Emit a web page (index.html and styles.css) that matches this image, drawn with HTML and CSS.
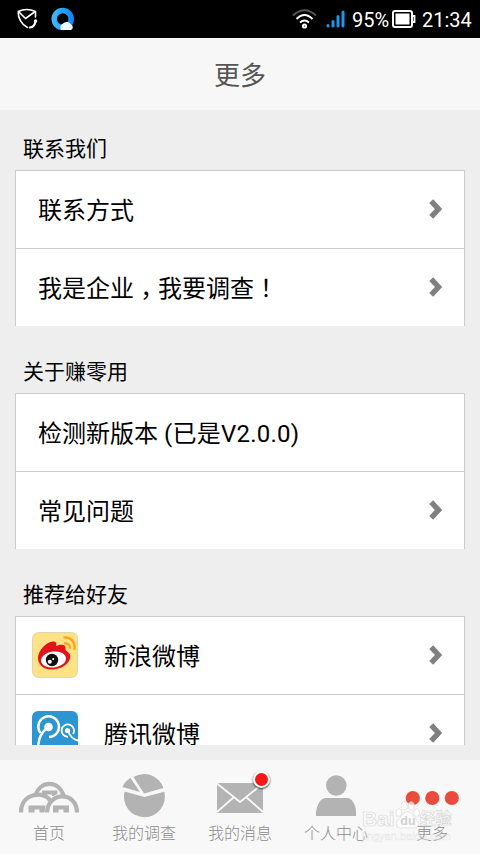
FILE: index.html
```html
<!DOCTYPE html>
<html lang="zh-CN">
<head>
<meta charset="utf-8">
<title>更多</title>
<link rel="stylesheet" href="styles.css">
</head>
<body>
<svg class="defs" aria-hidden="true">
  <symbol id="chevron" viewBox="0 0 14 20"><path d="M2.200 2.200 L9.500 10 L2.200 17.800" fill="none" stroke="#808080" stroke-width="5.400"/></symbol>
</svg>
<div class="status">
  <svg class="status-left" width="60" height="26" viewBox="0 0 60 26">
    <g fill="none" stroke="#fff" stroke-width="1.600" stroke-linecap="round" stroke-linejoin="round">
      <path d="M10.500 21.500C4.500 18.500 1 12 1.200 5.500Q9.500 1.500 18.500 5.500V11"/>
      <path d="M2 6L8.500 12.500 17.500 6"/>
      <path d="M18.500 15.500Q17.500 21 12.800 21.500" stroke-width="2"/>
    </g>
    <circle cx="18.600" cy="15" r="1.700" fill="#fff"/>
    <defs><linearGradient id="ring" x1="0" x2="1"><stop offset="0" stop-color="#3db4fb"/><stop offset="1" stop-color="#0d8cf8"/></linearGradient></defs>
    <circle cx="45.700" cy="13" r="8.500" fill="none" stroke="url(#ring)" stroke-width="5.500"/>
    <path d="M44 24A4.500 4.500 0 0 1 46 17.500A5 5 0 0 1 54 18.500A3 3 0 0 1 54 24Z" fill="#f2f8ff"/>
  </svg>
  <div class="status-right">
    <svg width="54" height="24" viewBox="0 0 54 24">
      <g fill="none" stroke="#fff" stroke-width="2">
        <path d="M1 8.500Q12.500-2 24 8.500" stroke="#555"/>
        <path d="M4.500 12Q12.500 4 20.500 12"/>
        <path d="M8 15.500Q12.500 11.500 17 15.500"/>
        <circle cx="12.500" cy="19" r="1.600"/>
      </g>
      <path d="M36 18.500V19M41 14.500V19M46 9.500V19M51 5V19" stroke="#2196e8" stroke-width="3" stroke-linecap="round"/>
    </svg>
    <span class="percent">95%</span>
    <svg class="battery" width="25" height="20" viewBox="0 0 25 20"><rect x="1" y="2" width="19" height="16" rx="2" fill="none" stroke="#fff" stroke-width="2"/><rect x="3.500" y="4.500" width="14" height="11" fill="#fff"/><path d="M20 7H22.500V13H20" fill="none" stroke="#fff" stroke-width="1.800"/></svg>
    <span class="time">21:34</span>
  </div>
</div>
<header class="title">更多</header>
<main class="content">
  <section class="group">
    <h2>联系我们</h2>
    <ul>
      <li><span>联系方式</span><svg class="chev"><use href="#chevron"/></svg></li>
      <li><span>我是企业<i class="punct comma" lang="zh-TW">，</i>我要调查<i class="punct" lang="zh-TW">！</i></span><svg class="chev"><use href="#chevron"/></svg></li>
    </ul>
  </section>
  <section class="group">
    <h2>关于赚零用</h2>
    <ul>
      <li><span>检测新版本 <span class="version">(已是V2.0.0)</span></span></li>
      <li><span>常见问题</span><svg class="chev"><use href="#chevron"/></svg></li>
    </ul>
  </section>
  <section class="group">
    <h2>推荐给好友</h2>
    <ul>
      <li class="share">
        <svg class="logo" viewBox="0 0 46 46">
          <rect x=".5" y=".5" width="45" height="45" rx="6" fill="#fee285" stroke="#d9d7ad"/>
          <path d="M6 26C6 19 14 10 21 9.500C24 9.500 25 11.500 24 14C29 12 34 12 33.500 17C33.300 19 36 19 38 22.500C40 28 33 37.500 19 37.500C11 37.500 6 32 6 26Z" fill="#e2141b"/>
          <ellipse cx="21.500" cy="27.500" rx="12.500" ry="8" fill="#fff" transform="rotate(-7 21.500 27.500)"/>
          <circle cx="20" cy="28" r="6.200" fill="#111"/>
          <circle cx="17.800" cy="29.800" r="2" fill="#fff"/><circle cx="21.200" cy="27" r="1" fill="#fff"/>
          <path d="M31.500 5.500C39 4.500 43.500 10 42.500 18M32 11.500C36 11 38.500 13 37.500 17" fill="none" stroke="#ffa21c" stroke-width="2.300"/>
        </svg>
        <span>新浪微博</span><svg class="chev"><use href="#chevron"/></svg>
      </li>
      <li class="share">
        <svg class="logo lower" viewBox="0 0 46 46">
          <rect width="46" height="46" rx="6" fill="#2d96d2"/>
          <circle cx="16.500" cy="16" r="4.300" fill="#fff"/>
          <path d="M8.500 22A10.300 10.300 0 1 1 17 26M15 17Q6 24 6 38" fill="none" stroke="#fff" stroke-width="2.500"/>
          <circle cx="35.500" cy="19.500" r="2.600" fill="#fff"/>
          <path d="M36 25.800A6.200 6.200 0 1 1 41 23M36 20Q39 28 46 29.500" fill="none" stroke="#fff" stroke-width="1.800"/>
        </svg>
        <span>腾讯微博</span><svg class="chev"><use href="#chevron"/></svg>
      </li>
    </ul>
  </section>
</main>
<nav class="tabs">
  <a class="home">
    <svg viewBox="0 0 64 46"><g fill="none" stroke="#b3b3b3" stroke-width="4.200"><path d="M4 39.500C4 19 28 18 33 27.500"/><path d="M30 39.500C31 18 60 18 60 39.500"/><path d="M18.500 22.500C23 7 42 7 46.500 22.500"/></g><path d="M11.500 32.500H28.500L27.500 39.500H22.500V36.500H17.500V39.500H11.500ZM36 32.500H52V39.500H46.500V36.500H41.500V39.500H36ZM25 17.500H40.500V21L36.500 23H35V21.500H30V23H28.500L25 21Z" fill="#b3b3b3"/></svg>
    <span>首页</span>
  </a>
  <a>
    <svg viewBox="0 0 64 46"><g fill="#b3b3b3" transform="translate(0 1)"><path d="M32.500 23L52.300 17.700A20.500 20.500 0 1 1 12.600 17.500Z"/><path d="M32 19.500L21.500 3A20.500 20.500 0 0 1 51.500 14Z"/><path d="M28 18L10.500 13Q13 7 18.500 4Z"/></g></svg>
    <span>我的调查</span>
  </a>
  <a>
    <svg viewBox="0 0 64 46"><rect x="9" y="10" width="46" height="30" fill="#b3b3b3"/><path d="M9 10.500L32 29 55 10.500M9 39L26 24M55 39L38 24" fill="none" stroke="#f8f8f8" stroke-width="1.800"/></svg>
    <i class="badge"></i>
    <span>我的消息</span>
  </a>
  <a>
    <svg viewBox="0 0 64 46"><g fill="#b3b3b3"><circle cx="32.300" cy="12.500" r="10.300"/><path d="M12 43V39C13 31 17 25 22 25H43C48 25 52 32 52 39V43Z"/></g></svg>
    <span>个人中心</span>
  </a>
  <a>
    <svg viewBox="0 0 64 46"><g fill="#e94b3c"><circle cx="12.800" cy="25" r="7.100"/><circle cx="32.300" cy="25" r="7.100"/><circle cx="51.800" cy="25" r="7.100"/></g></svg>
    <span>更多</span>
  </a>
  <div class="watermark">
    <div class="mark"><b>Bai</b><svg width="25" height="29" viewBox="0 0 26 30"><ellipse cx="4" cy="12" rx="3" ry="4"/><ellipse cx="9.500" cy="5" rx="3" ry="4.300"/><ellipse cx="17" cy="5" rx="3" ry="4.300"/><ellipse cx="22.500" cy="12" rx="3" ry="4"/><path d="M13 11C17 11 19 16 23 20C27 25 22 29 18 28H8C3 29-1 25 3 20C7 16 9 11 13 11Z"/><text x="5.500" y="25">du</text></svg><b class="cn">经验</b></div>
    <div class="url">jingyan.baidu.com</div>
  </div>
</nav>
</body>
</html>
```
FILE: styles.css
```css
* { box-sizing: border-box; }
body {
  margin: 0;
  width: 480px;
  height: 854px;
  overflow: hidden;
  display: flex;
  flex-direction: column;
  background: #eee;
  color: #000;
  font-family: Roboto, "Noto Sans CJK SC", sans-serif;
}
.defs { position: absolute; width: 0; height: 0; }
.status {
  height: 38px;
  flex: none;
  display: flex;
  justify-content: space-between;
  align-items: center;
  padding: 0 9px 0 17px;
  background: #000;
  color: #fff;
  font-size: 20px;
}
.status-right { display: flex; align-items: center; white-space: nowrap; }
.percent { margin-left: 6px; width: 37px; padding-top: 2px; }
.battery { margin-left: 3px; }
.time { margin-left: 5px; width: 49px; padding-top: 2px; }
.title {
  height: 72px;
  flex: none;
  background: #f7f7f7;
  color: #555;
  padding-top: 2px;
  font-size: 26px;
  line-height: 72px;
  text-align: center;
}
.content { height: 635px; flex: none; overflow: hidden; padding: 0 15px; }
.group { margin-top: 23px; }
.group:first-child { padding-top: 16px; margin-top: 0; }
.group h2 {
  margin: 0;
  height: 44px;
  padding: 1px 0 0 8px;
  font-size: 21px;
  font-weight: 400;
  line-height: 44px;
}
.group ul {
  margin: 0;
  padding: 0;
  list-style: none;
  background: #fff;
  border: 1px solid #ccc;
  border-width: 0 1px;
}
.group li {
  height: 78px;
  display: flex;
  align-items: center;
  border-top: 1px solid #ccc;
  padding: 0 21px 2px 22px;
  font-size: 24px;
}
.group li.share { padding-left: 16px; }
.logo { width: 46px; height: 46px; margin-right: 26px; }
.logo.lower { margin-top: 2px; }
.punct { font-style: normal; font-family: "Noto Sans CJK TC", sans-serif; line-height: 0; }
.comma { vertical-align: -7px; }
.version { letter-spacing: .25px; }
.chev { width: 14px; height: 20px; margin-left: auto; }
.tabs {
  position: relative;
  height: 94px;
  margin-top: 15px;
  flex: none;
  display: flex;
  background: #f8f8f8;
}
.tabs a {
  position: relative;
  width: 96px;
  padding-top: 13px;
  display: flex;
  flex-direction: column;
  align-items: center;
  color: #8c8c8c;
  font-size: 16px;
  font-weight: 300;
  line-height: 24px;
}
.tabs a.home { padding-left: 2px; }
.tabs a svg { width: 64px; height: 46px; flex: none; }
.tabs a span { margin-top: 3px; }
.badge {
  position: absolute;
  left: 61px;
  top: 11px;
  width: 17px;
  height: 17px;
  border: 2px solid #fff;
  border-radius: 50%;
  background: #f91616;
  box-shadow: 0 1px 2px #333;
}
.watermark {
  position: absolute;
  left: 362px;
  top: 40px;
  width: 100px;
  color: rgba(255, 255, 255, .7);
  font-family: "Liberation Sans", "Noto Sans CJK SC", sans-serif;
  -webkit-text-stroke: .7px #d8d8d8;
}
.mark { display: flex; align-items: flex-end; height: 30px; }
.mark b { font-size: 21px; line-height: 22px; }
.mark svg { fill: rgba(255, 255, 255, .7); stroke: #d8d8d8; stroke-width: .7; }
.mark text { font: bold 13px "Liberation Sans", sans-serif; fill: #d0d0d0; stroke: none; -webkit-text-stroke: 0; }
.mark .cn { font-size: 16px; }
.url { font-size: 11px; line-height: 13px; opacity: .6; -webkit-text-stroke-width: .4px; }
```
